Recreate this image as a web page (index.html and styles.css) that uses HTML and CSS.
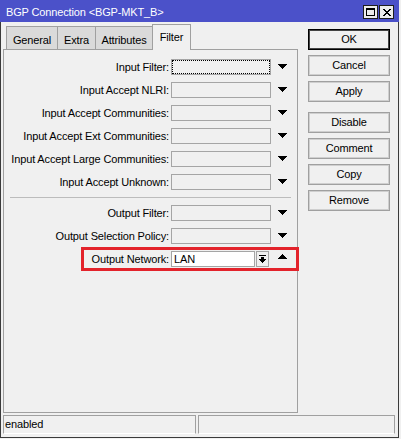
FILE: index.html
```html
<!DOCTYPE html>
<html>
<head>
<meta charset="utf-8">
<title>BGP Connection</title>
<link rel="stylesheet" href="styles.css">
</head>
<body>
<div class="win">
  <div class="titlebar">
    <span class="title">BGP Connection &lt;BGP-MKT_B&gt;</span>
    <div class="tbtns">
      <span class="tbtn"><svg width="9" height="8" viewBox="0 0 9 8"><path fill-rule="evenodd" d="M0 0h9v8H0z M1 2h7v5H1z"/></svg></span>
      <span class="tbtn"><svg width="8" height="7" viewBox="0 0 8 7"><path d="M0 0h2v1h1v1h2v-1h1v-1h2v1h-1v1h-1v1h-1v1h1v1h1v1h1v1h-2v-1h-1v-1h-2v1h-1v1h-2v-1h1v-1h1v-1h1v-1h-1v-1h-1v-1h-1z"/></svg></span>
    </div>
  </div>
  <div class="main">
    <div class="left">
      <div class="tabs">
        <div class="tab t-general">General</div>
        <div class="tab t-extra">Extra</div>
        <div class="tab t-attr">Attributes</div>
        <div class="tab t-filter active">Filter</div>
      </div>
      <div class="panel">
        <div class="row"><span class="lbl">Input Filter:</span><span class="field focus"></span><svg class="dd" width="9" height="5" viewBox="0 0 9 5"><path d="M0 0h9v1h-1v1h-1v1h-1v1h-1v1h-1v-1h-1v-1h-1v-1h-1v-1h-1z"/></svg></div>
        <div class="row"><span class="lbl">Input Accept NLRI:</span><span class="field"></span><svg class="dd" width="9" height="5" viewBox="0 0 9 5"><path d="M0 0h9v1h-1v1h-1v1h-1v1h-1v1h-1v-1h-1v-1h-1v-1h-1v-1h-1z"/></svg></div>
        <div class="row"><span class="lbl">Input Accept Communities:</span><span class="field"></span><svg class="dd" width="9" height="5" viewBox="0 0 9 5"><path d="M0 0h9v1h-1v1h-1v1h-1v1h-1v1h-1v-1h-1v-1h-1v-1h-1v-1h-1z"/></svg></div>
        <div class="row"><span class="lbl">Input Accept Ext Communities:</span><span class="field"></span><svg class="dd" width="9" height="5" viewBox="0 0 9 5"><path d="M0 0h9v1h-1v1h-1v1h-1v1h-1v1h-1v-1h-1v-1h-1v-1h-1v-1h-1z"/></svg></div>
        <div class="row"><span class="lbl">Input Accept Large Communities:</span><span class="field"></span><svg class="dd" width="9" height="5" viewBox="0 0 9 5"><path d="M0 0h9v1h-1v1h-1v1h-1v1h-1v1h-1v-1h-1v-1h-1v-1h-1v-1h-1z"/></svg></div>
        <div class="row"><span class="lbl">Input Accept Unknown:</span><span class="field"></span><svg class="dd" width="9" height="5" viewBox="0 0 9 5"><path d="M0 0h9v1h-1v1h-1v1h-1v1h-1v1h-1v-1h-1v-1h-1v-1h-1v-1h-1z"/></svg></div>
        <div class="sep"></div>
        <div class="row"><span class="lbl">Output Filter:</span><span class="field"></span><svg class="dd" width="9" height="5" viewBox="0 0 9 5"><path d="M0 0h9v1h-1v1h-1v1h-1v1h-1v1h-1v-1h-1v-1h-1v-1h-1v-1h-1z"/></svg></div>
        <div class="row"><span class="lbl">Output Selection Policy:</span><span class="field"></span><svg class="dd" width="9" height="5" viewBox="0 0 9 5"><path d="M0 0h9v1h-1v1h-1v1h-1v1h-1v1h-1v-1h-1v-1h-1v-1h-1v-1h-1z"/></svg></div>
        <div class="row"><span class="lbl">Output Network:</span><span class="field short white">LAN</span><span class="sbtn"><svg width="7" height="8" viewBox="0 0 7 8"><path d="M0 0h7v1H0z M2 2h3v2H2z M0 4h7v1h-1v1h-1v1h-1v1h-1v-1h-1v-1h-1v-1h-1z"/></svg></span><svg class="up" width="9" height="5" viewBox="0 0 9 5"><path d="M4 0h1v1h1v1h1v1h1v1h1v1H0v-1h1v-1h1v-1h1v-1h1z"/></svg></div>
        <div class="highlight"></div>
      </div>
    </div>
    <div class="buttons">
      <div class="btn default">OK</div>
      <div class="btn">Cancel</div>
      <div class="btn">Apply</div>
      <div class="btn group">Disable</div>
      <div class="btn">Comment</div>
      <div class="btn">Copy</div>
      <div class="btn">Remove</div>
    </div>
  </div>
  <div class="status">
    <div class="pane p1">enabled</div>
    <div class="pane p2"></div>
  </div>
</div>
</body>
</html>
```
FILE: styles.css
```css
* { box-sizing: border-box; }
html, body { margin: 0; padding: 0; }
body {
  width: 401px;
  height: 439px;
  overflow: hidden;
  background: #f0f0f0;
  font-family: "Liberation Sans", Arial, sans-serif;
  font-size: 11px;
  letter-spacing: -0.14px;
  color: #000;
}
.win {
  width: 399px;
  height: 438px;
  background: #f0f0f0;
  border: 1px solid #3a3a3a;
  border-top: 0;
}
.titlebar {
  margin: 0 -1px;
  height: 22px;
  background: #4b51c9;
  display: flex;
  align-items: center;
  padding: 0 5px 0 6px;
}
.title {
  color: #fff;
  font-size: 11px;
  margin-top: 1px;
}
.tbtns {
  margin-left: auto;
  align-self: flex-start;
  margin-top: 5px;
  display: flex;
  gap: 1px;
}
.tbtn {
  width: 15px;
  height: 14px;
  background: #ececec;
  border: 1px solid #1e1e1e;
  display: flex;
  align-items: center;
  justify-content: center;
}
.tbtn svg { display: block; fill: #000; }

.main {
  display: flex;
  padding: 2px 0 0 2px;
}
.left { width: 295px; }
.tabs {
  display: flex;
  align-items: flex-end;
  height: 25px;
  padding-left: 3px;
}
.tab {
  height: 23px;
  border: 1px solid #a0a0a0;
  border-bottom: 0;
  border-right: 0;
  background: #dadada;
  text-align: center;
  padding-top: 5px;
  line-height: 16px;
  white-space: nowrap;
}
.t-general { width: 51px; }
.t-extra { width: 38px; }
.t-attr { width: 57px; }
.t-filter { width: 39px; }
.tab.active {
  height: 26px;
  margin-bottom: -1px;
  background: #f0f0f0;
  border-right: 1px solid #a0a0a0;
  padding-top: 4px;
  position: relative;
  z-index: 1;
}
.panel {
  position: relative;
  height: 364px;
  border: 1px solid #a0a0a0;
  background: #f0f0f0;
  padding-top: 9px;
  display: grid;
  grid-auto-rows: min-content;
  row-gap: 7px;
  align-content: start;
}
.row {
  display: flex;
  height: 16px;
}
.lbl {
  flex: 0 0 165px;
  text-align: right;
  line-height: 16px;
  white-space: nowrap;
}
.field {
  flex: 0 0 100px;
  height: 16px;
  margin-left: 2px;
  border: 1px solid #a5a5a5;
  background: #f0f0f0;
  line-height: 14px;
  padding-left: 2px;
}
.field.focus {
  outline: 1px dotted #000;
  outline-offset: -2px;
}
.field.short { flex-basis: 84px; }
.field.white { background: #fff; }
.dd {
  display: block;
  margin: 5px 0 0 7px;
  fill: #000;
}
.sbtn {
  width: 13px;
  height: 16px;
  margin-left: 1px;
  border: 1px solid #a5a5a5;
  background: #f0f0f0;
  display: flex;
  align-items: center;
  justify-content: center;
}
.sbtn svg { display: block; fill: #000; }
.up {
  display: block;
  margin: 3px 0 0 9px;
  fill: #000;
}
.sep {
  height: 1px;
  margin: 0 6px;
  background: #bcbcbc;
}
.highlight {
  position: absolute;
  left: 77px;
  top: 197px;
  width: 218px;
  height: 24px;
  border: 3px solid #e3232b;
}

.buttons {
  margin: 5px 0 0 10px;
  width: 82px;
  display: flex;
  flex-direction: column;
  gap: 5px;
}
.btn {
  height: 21px;
  border: 1px solid #a0a0a0;
  box-shadow: inset 0 0 0 1px #cfcfcf;
  background: #f0f0f0;
  text-align: center;
  line-height: 19px;
}
.btn.default {
  border-color: #000;
  box-shadow: inset 0 0 0 1px #444;
}
.btn.group { margin-top: 5px; }

.status {
  display: flex;
  margin-top: 2px;
  padding-left: 2px;
}
.pane {
  height: 19px;
  border: 1px solid #a0a0a0;
  border-bottom-color: #fff;
  line-height: 17px;
  padding-left: 1px;
}
.p1 { width: 193px; }
.p2 { width: 197px; margin-left: 2px; }
```
